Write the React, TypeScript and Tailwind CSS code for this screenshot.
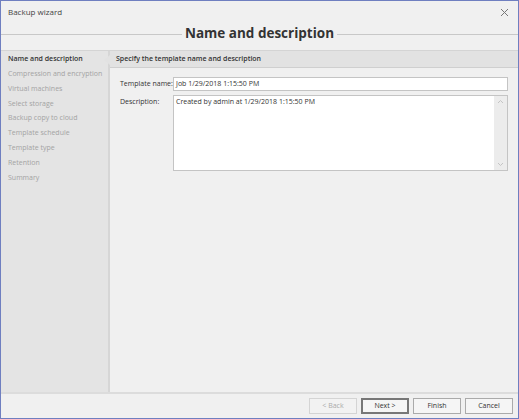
const STEPS = [
  "Name and description",
  "Compression and encryption",
  "Virtual machines",
  "Select storage",
  "Backup copy to cloud",
  "Template schedule",
  "Template type",
  "Retention",
  "Summary",
];

export default function App() {
  return (
    <div
      className="w-[519px] h-[419px] flex flex-col bg-[#f0f0f0] border border-[#6f7fc0] text-[#333] overflow-hidden"
      style={{ fontFamily: '"Open Sans", "Noto Sans", sans-serif' }}
    >
      {/* Title bar */}
      <div className="h-[20px] shrink-0 flex items-center justify-between pl-[7px] pr-[9px] pt-[2px]">
        <span className="text-[8px] text-[#444]">Backup wizard</span>
        <svg width="9" height="9" viewBox="0 0 9 9" className="text-[#777]">
          <path d="M1 1 L8 8 M8 1 L1 8" stroke="currentColor" strokeWidth="1" />
        </svg>
      </div>

      {/* Heading */}
      <div className="h-[29px] shrink-0 flex items-center gap-[3px] pb-[3px]">
        <div className="flex-1 h-px bg-[#c8c8c8]" />
        <h1 className="text-[13.5px] font-bold text-[#333] leading-none">Name and description</h1>
        <div className="flex-1 h-px bg-[#c8c8c8]" />
      </div>

      {/* Body */}
      <div className="flex-1 flex border-t border-[#d4d4d4] min-h-0">
        {/* Steps */}
        <div className="w-[109px] shrink-0 bg-[#e4e4e4] border-r-2 border-[#d6d6d6] pt-[1px]">
          {STEPS.map((s, i) => (
            <div
              key={s}
              className={`h-[14.8px] pl-[7px] flex items-center text-[7px] whitespace-nowrap ${
                i === 0 ? "font-semibold text-[#333]" : "text-[#a3a3a3]"
              }`}
            >
              {s}
            </div>
          ))}
        </div>

        {/* Content */}
        <div className="flex-1 flex flex-col min-w-0">
          <div className="relative h-[17px] shrink-0 bg-[#e2e2e2] border-b border-[#cfcfcf] flex items-center pl-[6px]">
            <span className="absolute left-[-6px] top-[4px] w-0 h-0 border-y-[5px] border-y-transparent border-r-[6px] border-r-[#e2e2e2]" />
            <span className="text-[7px] font-semibold text-[#333]">Specify the template name and description</span>
          </div>

          <div className="pl-[10px] pr-[10px] pt-[9px] flex flex-col gap-[4px]">
            <div className="flex items-center">
              <span className="w-[53px] shrink-0 text-[7px] text-[#333] whitespace-nowrap">Template name:</span>
              <div className="flex-1 h-[14px] bg-white border border-[#c4c4c4] flex items-center pl-[2px] text-[7px] text-[#333]">
                Job 1/29/2018 1:15:50 PM
              </div>
            </div>
            <div className="flex items-start">
              <span className="w-[53px] shrink-0 text-[7px] text-[#333] pt-[2px]">Description:</span>
              <div className="flex-1 h-[76px] bg-white border border-[#c4c4c4] flex">
                <div className="flex-1 pl-[2px] pt-[1px] text-[7px] text-[#333]">
                  Created by admin at 1/29/2018 1:15:50 PM
                </div>
                <div className="w-[13px] bg-[#ececec] flex flex-col justify-between items-center py-[3px]">
                  <svg width="7" height="5" viewBox="0 0 7 5">
                    <path d="M1 4 L3.5 1.5 L6 4" fill="none" stroke="#c4c4c4" strokeWidth="1" />
                  </svg>
                  <svg width="7" height="5" viewBox="0 0 7 5">
                    <path d="M1 1 L3.5 3.5 L6 1" fill="none" stroke="#c4c4c4" strokeWidth="1" />
                  </svg>
                </div>
              </div>
            </div>
          </div>
        </div>
      </div>

      {/* Footer */}
      <div className="h-[26px] shrink-0 border-t-2 border-[#dcdcdc] flex items-center justify-end gap-[4px] pr-[5px]">
        <button className="w-[48px] h-[16px] border border-[#d4d4d4] bg-[#f2f2f2] text-[7px] text-[#aaa]">&lt; Back</button>
        <button className="w-[48px] h-[16px] border-2 border-[#777] bg-[#f5f5f5] text-[7px] text-[#333]">Next &gt;</button>
        <button className="w-[48px] h-[16px] border border-[#aaa] bg-[#f5f5f5] text-[7px] text-[#333]">Finish</button>
        <button className="w-[48px] h-[16px] border border-[#aaa] bg-[#f5f5f5] text-[7px] text-[#333]">Cancel</button>
      </div>
    </div>
  );
}
